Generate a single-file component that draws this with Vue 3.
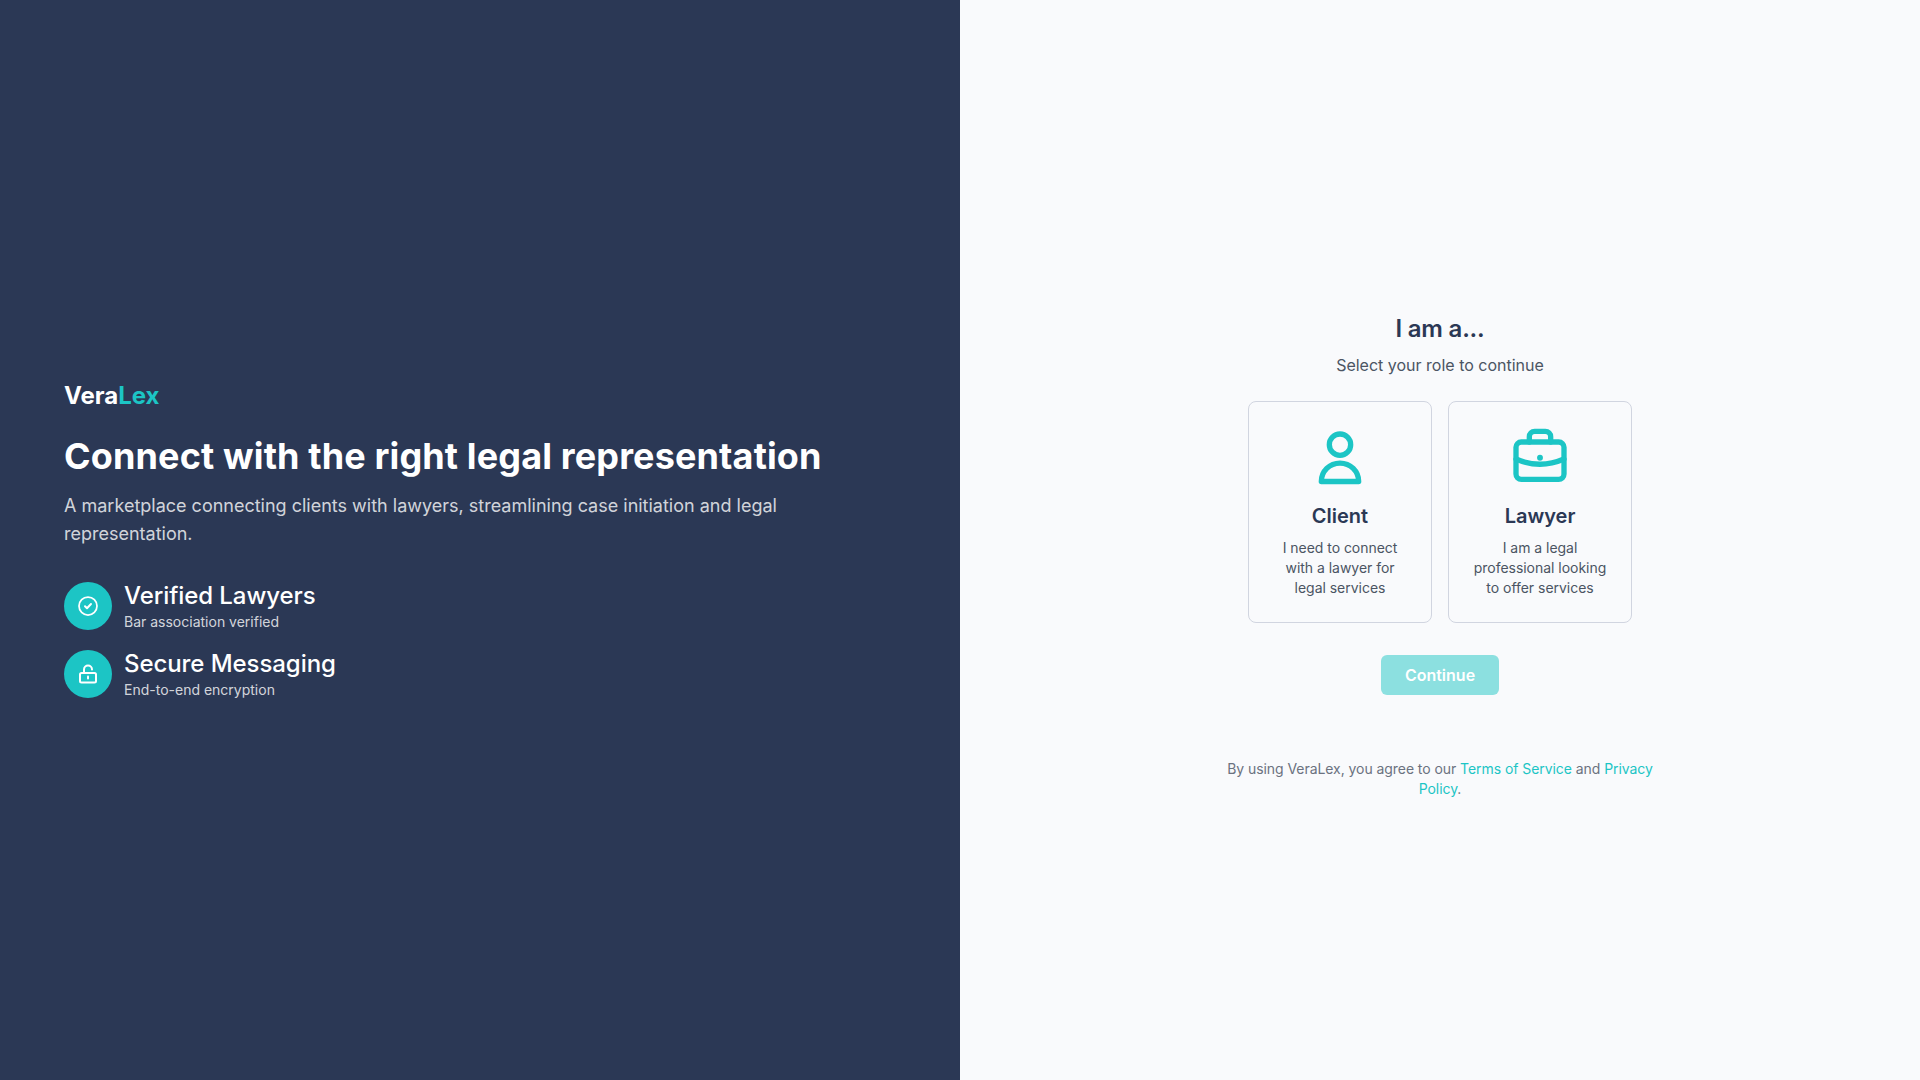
<script setup>
const features = [
  { title: 'Verified Lawyers', sub: 'Bar association verified', icon: 'check' },
  { title: 'Secure Messaging', sub: 'End-to-end encryption', icon: 'lock' }
]
</script>

<template>
  <div class="page">
    <section class="left">
      <div class="logo">Vera<span class="accent">Lex</span></div>
      <h1>Connect with the right legal representation</h1>
      <p class="lead">A marketplace connecting clients with lawyers, streamlining case initiation and legal representation.</p>
      <ul class="features">
        <li v-for="f in features" :key="f.title" class="feature">
          <span class="badge">
            <svg v-if="f.icon === 'check'" viewBox="0 0 24 24" width="24" height="24" fill="none" stroke="#fff" stroke-width="1.75" stroke-linecap="round" stroke-linejoin="round">
              <circle cx="12" cy="12" r="9" />
              <path stroke-width="2" d="M9 12.2l2 2 4-4.2" />
            </svg>
            <svg v-else viewBox="0 0 24 24" width="24" height="24" fill="none" stroke="#fff" stroke-width="2" stroke-linecap="round" stroke-linejoin="round">
              <rect x="4" y="11" width="16" height="9.5" rx="1.5" />
              <path d="M8 11V7.5a4 4 0 0 1 8 0" />
              <path d="M12 14.5v2" />
            </svg>
          </span>
          <div>
            <div class="f-title">{{ f.title }}</div>
            <div class="f-sub">{{ f.sub }}</div>
          </div>
        </li>
      </ul>
    </section>
    <section class="right">
      <div class="panel">
        <h2>I am a...</h2>
        <p class="hint">Select your role to continue</p>
        <div class="cards">
          <div class="card">
            <svg viewBox="0 0 24 24" width="64" height="64" fill="none" stroke="#1cc5c5" stroke-width="2" stroke-linecap="round" stroke-linejoin="round">
              <circle cx="12" cy="7" r="4" />
              <path d="M5 20.8c0-3.8 3.1-6.9 7-6.9s7 3.1 7 6.9z" />
            </svg>
            <h3>Client</h3>
            <p>I need to connect with a lawyer for legal services</p>
          </div>
          <div class="card">
            <svg viewBox="0 0 24 24" width="64" height="64" fill="none" stroke="#1cc5c5" stroke-width="2" stroke-linecap="round" stroke-linejoin="round">
              <rect x="3" y="6" width="18" height="14" rx="2" />
              <path d="M8 6V4a2 2 0 0 1 2-2h4a2 2 0 0 1 2 2v2" />
              <path d="M3 12.4c6 2.6 12 2.6 18 0" />
              <circle cx="12" cy="11.9" r="1.1" fill="#1cc5c5" stroke="none" />
            </svg>
            <h3>Lawyer</h3>
            <p>I am a legal professional looking to offer services</p>
          </div>
        </div>
        <button class="continue" type="button">Continue</button>
        <p class="terms">By using VeraLex, you agree to our <a>Terms of Service</a> and <a>Privacy Policy</a>.</p>
      </div>
    </section>
  </div>
</template>

<style scoped>
.page {
  display: flex;
  min-height: 100vh;
  font-family: Inter, "Noto Sans", sans-serif;
  text-rendering: optimizeLegibility;
}
.left {
  width: 50%;
  box-sizing: border-box;
  padding: 0 64px;
  background: #2b3855;
  color: #fff;
  display: flex;
  flex-direction: column;
  justify-content: center;
}
.logo {
  font-size: 24px;
  line-height: 32px;
  font-weight: 700;
  margin-bottom: 24px;
}
.accent { color: #1cc5c5; }
h1 {
  margin: 0 0 16px;
  font-size: 36px;
  line-height: 40px;
  font-weight: 700;
  letter-spacing: 0.14px;
}
.lead {
  margin: 0 0 32px;
  font-size: 18px;
  line-height: 28px;
  color: rgba(255, 255, 255, 0.8);
  max-width: 768px;
}
.features {
  list-style: none;
  margin: 0;
  padding: 0;
  display: flex;
  flex-direction: column;
  gap: 16px;
}
.feature {
  display: flex;
  align-items: center;
  gap: 12px;
}
.badge {
  width: 48px;
  height: 48px;
  border-radius: 50%;
  background: #1cc5c5;
  display: flex;
  align-items: center;
  justify-content: center;
}
.f-title {
  font-size: 24px;
  line-height: 32px;
  font-weight: 500;
  letter-spacing: -0.07px;
}
.f-sub {
  font-size: 14px;
  line-height: 20px;
  color: rgba(255, 255, 255, 0.8);
}
.right {
  width: 50%;
  background: #f9fafc;
  display: flex;
  align-items: center;
  justify-content: center;
}
.panel {
  width: 448px;
  padding-top: 32px;
  text-align: center;
  display: flex;
  flex-direction: column;
  align-items: center;
}
h2 {
  margin: 0 0 8px;
  font-size: 24px;
  line-height: 32px;
  font-weight: 600;
  letter-spacing: -0.2px;
  color: #2b3855;
}
.hint {
  margin: 0 0 24px;
  font-size: 16px;
  line-height: 24px;
  color: #4b5563;
}
.cards {
  display: flex;
  gap: 16px;
  margin-bottom: 32px;
}
.card {
  width: 184px;
  height: 222px;
  box-sizing: border-box;
  padding: 24px;
  border: 1px solid #d1d5e0;
  border-radius: 8px;
  display: flex;
  flex-direction: column;
  align-items: center;
}
h3 {
  margin: 12px 0 8px;
  font-size: 20px;
  line-height: 28px;
  font-weight: 600;
  color: #2b3855;
}
.card p {
  margin: 0;
  font-size: 14px;
  line-height: 20px;
  letter-spacing: -0.03px;
  color: #4b5563;
}
.continue {
  width: 118px;
  height: 40px;
  border: 0;
  border-radius: 6px;
  background: #8ce0e0;
  color: #fff;
  font: 600 16px/24px Inter, sans-serif;
  margin-bottom: 64px;
}
.terms {
  margin: 0;
  font-size: 14px;
  line-height: 20px;
  letter-spacing: -0.06px;
  color: #6b7280;
}
.terms a { color: #1cc5c5; }
</style>
